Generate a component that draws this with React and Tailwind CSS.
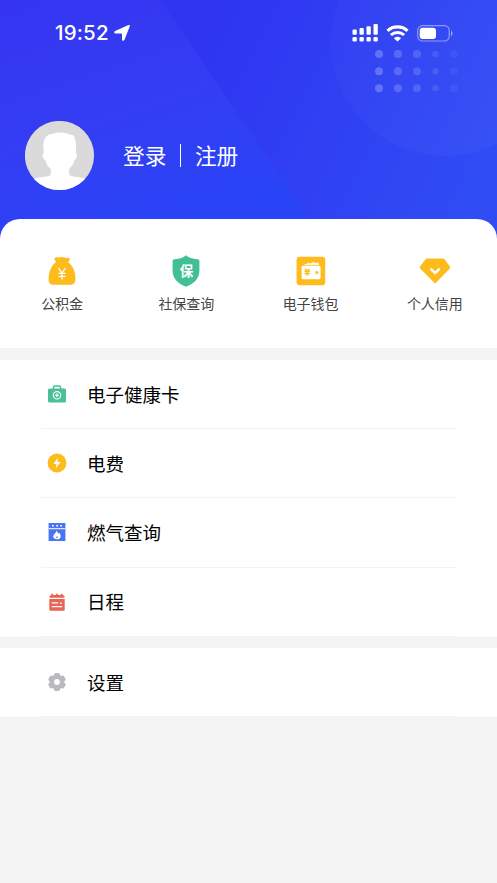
import React from "react";

const MoneyBagIcon = () => (
  <svg width="32" height="32" viewBox="0 0 32 32">
    <path
      d="M8.800 2.900C9.800 1.700 11 2.200 12.500 2.400c1.700.2 2.500-.5 4.200-.3 1.500.1 2.500.9 4 .8 1.300-.1 2.100-.2 2.700.5.600.8.300 1.700-.3 2.500L22 7.200c4.600 3 7.300 9.100 7.500 16.100.1 4.500-1.900 6.500-5.300 6.500H7.800c-3.500 0-5.400-2-5.200-6.300C2.900 16.400 5.700 10 10.200 7L8.900 5.300c-.6-.8-.7-1.700-.1-2.400z"
      fill="#fdbb1c"
    />
    <path d="M12.500 13l3.500 5 3.500-5M16 18v6.500M12.500 18.400h7M12.500 21.300h7" stroke="#fff" strokeWidth="1.300" fill="none" />
  </svg>
);

const ShieldIcon = () => (
  <span className="relative flex h-8 w-8 items-center justify-center">
    <svg className="absolute inset-0" width="32" height="32" viewBox="0 0 32 32">
      <path
        d="M16 .2c2.300 2.200 6 3.600 11.500 4 1.200.1 1.900.7 1.900 1.800v9.500c0 8.500-5.800 13.400-13.400 16.200C8.400 28.900 2.600 24 2.600 15.500V6c0-1.100.7-1.700 1.900-1.800C10 3.800 13.700 2.400 16 .2z"
        fill="#43bf96"
      />
    </svg>
    <span className="relative text-[13.500px] font-bold leading-none text-white">保</span>
  </span>
);

const WalletIcon = () => (
  <svg width="32" height="32" viewBox="0 0 32 32">
    <rect x="1.600" y="1.800" width="28.600" height="28.400" rx="3" fill="#fdbb1c" />
    <path d="M8 10.200l5-2.200 2.500.5L17.800 7l3 1 2.200-.5 1.500 2.700z" fill="#fff" />
    <path d="M6.800 10.300h18.400" stroke="#fdbb1c" strokeWidth=".7" />
    <rect x="6.600" y="10.700" width="19" height="13.600" rx="1.600" fill="#fff" />
    <path d="M10 13.700l2.200 2.300 2.200-2.300M12.200 16v4.800M9.500 16.200h5.400M9.500 18.500h5.400" stroke="#fdbb1c" strokeWidth="1.400" fill="none" />
    <circle cx="21.800" cy="17.600" r="1.500" fill="#fdbb1c" />
  </svg>
);

const DiamondIcon = () => (
  <svg width="32" height="32" viewBox="0 0 32 32">
    <path
      d="M8 3.500h16.200c.6 0 1 .2 1.400.7l5.300 7.300c.5.700.4 1.300-.1 1.900L17.200 27.500c-.7.700-1.500.7-2.200 0L1.200 13.400c-.5-.6-.6-1.200-.1-1.900l5.400-7.300c.4-.5.900-.7 1.500-.7z"
      fill="#fdbb1c"
    />
    <path d="M12.300 14.300l3.800 3.800 3.800-3.800" stroke="#fff" strokeWidth="2.500" fill="none" strokeLinecap="round" strokeLinejoin="round" />
  </svg>
);

const HealthIcon = () => (
  <svg width="20" height="20" viewBox="0 0 20 20">
    <path d="M6.500 5V3.300q0-1.200 1.200-1.200h4.600q1.200 0 1.200 1.200V5" stroke="#4abf98" strokeWidth="1.500" fill="none" />
    <rect x="1" y="4.500" width="18" height="14" rx="1.500" fill="#4abf98" />
    <circle cx="10" cy="11.300" r="3.700" stroke="#fff" strokeWidth="1.100" fill="none" />
    <path d="M10 9.500v3.600M8.200 11.300h3.600" stroke="#fff" strokeWidth="1.300" />
  </svg>
);

const PowerIcon = () => (
  <svg width="20" height="20" viewBox="0 0 20 20">
    <circle cx="10" cy="10" r="9.400" fill="#fdbb1c" />
    <path d="M11 4.800L6.400 10.900h3l-.6 4.400 4.800-6.200h-3.100z" fill="#fff" />
  </svg>
);

const GasIcon = () => (
  <svg width="20" height="20" viewBox="0 0 20 20">
    <path d="M1.600 1h16.800v18H1.600z" fill="#4b74f5" />
    <path d="M2 6.700h16" stroke="#fff" strokeWidth="1" />
    <path d="M5 3.800h1.700M9.200 3.800h1.700M13.300 3.800H15" stroke="#fff" strokeWidth="1.400" />
    <path d="M9.700 8.500c.3 1.700 1.200 2.200 1.900 3.200l.8-1c1.300 2 1.800 3.400.8 5-.6 1-1.500 1.600-3.300 1.600s-2.900-.6-3.400-1.700c-.8-1.700.2-2.800 1.400-4.200 1-1 1.500-1.700 1.800-2.900z" fill="#fff" />
    <path d="M10 14c.6 1 .9 1.200.8 1.700-.3.600-1.200.6-1.500 0-.2-.6.300-1 .7-1.700z" fill="#4b74f5" />
  </svg>
);

const CalendarIcon = () => (
  <svg width="20" height="20" viewBox="0 0 20 20">
    <path
      d="M2.300 5.800q0-2.600 2-2.800V2.200q.9-1.500 1.800 0V3h3V2.200q.9-1.500 1.800 0V3h3V2.200q.9-1.500 1.800 0V3q2 .2 2 2.800z"
      fill="#e86554"
    />
    <path d="M2.300 7h15.400v10.500q0 1.300-1.300 1.300H3.600q-1.300 0-1.300-1.300z" fill="#e86554" />
    <path d="M4.700 10.800h6.500M4.700 14.600h10.500M13 11.100h1.800" stroke="#fff" strokeWidth="1.300" />
  </svg>
);

const GearIcon = () => (
  <svg width="20" height="20" viewBox="0 0 20 20">
    <g fill="#b8babe">
      <circle cx="10" cy="10" r="7.400" />
      <rect x="7" y="1" width="6" height="18" rx="1.800" />
      <rect x="7" y="1" width="6" height="18" rx="1.800" transform="rotate(60 10 10)" />
      <rect x="7" y="1" width="6" height="18" rx="1.800" transform="rotate(120 10 10)" />
    </g>
    <circle cx="10" cy="10" r="2.900" fill="#fff" />
  </svg>
);

const StatusBar = () => (
  <div className="relative flex h-[66px] items-center justify-between pl-[55px] pr-[43px] text-white">
    <div className="flex items-center gap-1">
      <span className="font-['Inter',sans-serif] text-[20.500px] font-medium leading-none tracking-[0.15px]">19:52</span>
      <svg width="18" height="18" viewBox="0 0 18 18">
        <path d="M15.500 1.100c1-.4 1.700.2 1.300 1.200L11.500 15.800c-.6 1.400-2.500 1.200-2.500-.4v-5.200c0-.5-.2-.7-.7-.7H2.700C1.100 9.500.7 7.500 2.100 6.900z" fill="#fff" />
      </svg>
    </div>
    <div className="flex items-center">
      <svg width="26" height="18" viewBox="0 0 26 18" fill="#fff">
        <rect x="0.500" y="5.500" width="4.300" height="5.200" rx="1" />
        <rect x="7.500" y="4.100" width="4.300" height="6.600" rx="1" />
        <rect x="14.500" y="2.200" width="4.300" height="8.500" rx="1" />
        <rect x="21.500" y="0" width="4.300" height="10.700" rx="1" />
        <rect x="0.500" y="13" width="4.300" height="4.500" rx="1.200" />
        <rect x="7.500" y="13" width="4.300" height="4.500" rx="1.200" />
        <rect x="14.500" y="13" width="4.300" height="4.500" rx="1.200" />
        <rect x="21.500" y="13" width="4.300" height="4.500" rx="1.200" />
      </svg>
      <svg className="ml-2" width="23" height="17" viewBox="0 0 23 17">
        <path d="M1.500 5.800c5.600-5.200 14.400-5.200 20 0" stroke="#fff" strokeWidth="3.200" fill="none" />
        <path d="M4.900 10c3.700-3.300 9.500-3.300 13.200 0" stroke="#fff" strokeWidth="3" fill="none" />
        <path d="M7.900 13.200c2.100-2 5.100-2 7.200 0l-3.600 3.400z" fill="#fff" />
      </svg>
      <svg className="ml-2" width="37" height="17" viewBox="0 0 37 17">
        <rect x=".7" y=".7" width="31.600" height="15.300" rx="4.800" stroke="#fff" strokeOpacity=".45" strokeWidth="1.200" fill="none" />
        <rect x="2.700" y="2.700" width="16.300" height="11.300" rx="3" fill="#fff" />
        <path d="M34 5.700c2 .8 2 4.500 0 5.300z" fill="#fff" fillOpacity=".5" />
      </svg>
    </div>
  </div>
);

const dots = [
  { x: 379, r: 4, opacity: 0.24 },
  { x: 398, r: 4, opacity: 0.19 },
  { x: 417, r: 4, opacity: 0.15 },
  { x: 435.5, r: 3.3, opacity: 0.1 },
  { x: 454, r: 4, opacity: 0.05 },
];

const HeaderBackground = () => (
  <svg className="absolute inset-0" width="497" height="245" viewBox="0 0 497 245">
    <defs>
      <linearGradient id="left" x1="0" y1="0" x2=".45" y2="1">
        <stop offset="0" stopColor="#3535f1" />
        <stop offset=".5" stopColor="#343df3" />
        <stop offset="1" stopColor="#2944f7" />
      </linearGradient>
      <linearGradient id="right" gradientUnits="userSpaceOnUse" x1="190" y1="60" x2="480" y2="200">
        <stop offset="0" stopColor="#2f35f1" />
        <stop offset="1" stopColor="#304df5" />
      </linearGradient>
      <linearGradient id="circle" x1="0" y1="0" x2="1" y2=".3">
        <stop offset="0" stopColor="#fff" stopOpacity=".015" />
        <stop offset="1" stopColor="#fff" stopOpacity=".03" />
      </linearGradient>
    </defs>
    <path d="M0 0h497v245H0z" fill="url(#right)" />
    <path d="M0 0h160l167 245H0z" fill="url(#left)" />
    <circle cx="445" cy="42" r="114" fill="url(#circle)" />
    {[54, 71.3, 88.3].map((y) =>
      dots.map((dot) => <circle key={`${dot.x}-${y}`} cx={dot.x} cy={y} r={dot.r} fill="#fff" fillOpacity={dot.opacity} />)
    )}
  </svg>
);

const Avatar = () => (
  <svg width="70" height="70" viewBox="0 0 70 70">
    <defs>
      <clipPath id="avatar">
        <circle cx="34.500" cy="34.500" r="34.600" />
      </clipPath>
    </defs>
    <g clipPath="url(#avatar)">
      <path d="M0 0h70v70H0z" fill="#dadada" />
      <path
        d="M8 58.500C14 55.500 22 56.500 25 54.300C26.500 53 26.200 49.500 25.500 47.500C22.500 45.500 21 42 20.300 39C17.800 38 16.700 33.500 18.300 32.500C19 32 18.500 29 18.300 26C18 18 21.500 13 28 12.800C33 11 40 11 44 13.500C48 13 50 15.200 49.500 17.500C51.500 20 51.300 27 50.800 32.200C53 33 52 38 49.500 39C48.500 42.500 47 45.500 44.500 47.500C43.800 49.500 43.500 53 45 54.300C48 56.500 56 55.500 62 58.500V75H8z"
        fill="#fff"
      />
    </g>
  </svg>
);

const shortcuts = [
  { label: "公积金", icon: <MoneyBagIcon /> },
  { label: "社保查询", icon: <ShieldIcon /> },
  { label: "电子钱包", icon: <WalletIcon /> },
  { label: "个人信用", icon: <DiamondIcon /> },
];

const services = [
  { label: "电子健康卡", icon: <HealthIcon /> },
  { label: "电费", icon: <PowerIcon /> },
  { label: "燃气查询", icon: <GasIcon /> },
  { label: "日程", icon: <CalendarIcon /> },
];

const MenuRow = ({ icon, label }) => (
  <div className="bg-white px-[41px]">
    <div className="flex h-[69.200px] items-center border-b border-[#f3f3f5]">
      <span className="ml-1.5 flex w-10 shrink-0">{icon}</span>
      <span className="text-[18.500px] leading-none text-black">{label}</span>
    </div>
  </div>
);

const App = () => {
  return (
    <div className="min-h-screen w-[497px] bg-[#f4f4f4] font-['Noto_Sans_CJK_SC',sans-serif]">
      <header className="relative h-[219px]">
        <HeaderBackground />
        <StatusBar />
        <div className="relative flex items-center pl-[25px] pt-[55px]">
          <Avatar />
          <div className="mb-0.5 ml-7 flex items-center text-[21.700px] leading-none text-white">
            <span>登录</span>
            <span className="mx-[13.500px] h-[23px] w-[1.500px] bg-white" />
            <span>注册</span>
          </div>
        </div>
      </header>

      <section className="relative grid h-[129px] grid-cols-4 rounded-t-[20px] bg-white pt-9">
        {shortcuts.map((item) => (
          <div key={item.label} className="flex flex-col items-center gap-2">
            {item.icon}
            <span className="text-sm leading-4 text-[#444]">{item.label}</span>
          </div>
        ))}
      </section>

      <section className="mt-3">
        {services.map((item) => (
          <MenuRow key={item.label} icon={item.icon} label={item.label} />
        ))}
      </section>

      <section className="mt-[11px]">
        <MenuRow icon={<GearIcon />} label="设置" />
      </section>
    </div>
  );
};

export default App;
